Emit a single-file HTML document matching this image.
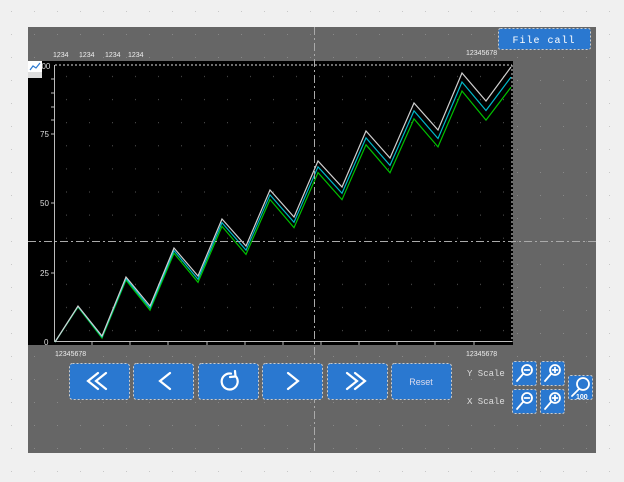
<!DOCTYPE html>
<html><head><meta charset="utf-8"><style>
html,body{margin:0;padding:0;background:#f0f0f0;width:624px;height:482px;overflow:hidden;font-family:"Liberation Mono",monospace}
</style></head><body>
<svg width="624" height="482" xmlns="http://www.w3.org/2000/svg" style="position:absolute;left:0;top:0">
<defs>
<pattern id="bgdots" width="23" height="23" patternUnits="userSpaceOnUse"><rect x="11" y="11" width="1" height="1" fill="#c8c8c8"/></pattern>
<pattern id="pdots" width="23" height="23" patternUnits="userSpaceOnUse"><rect x="11" y="11" width="1" height="1" fill="#888"/></pattern>
<pattern id="cdots" width="23" height="23.1" patternUnits="userSpaceOnUse" x="55" y="65"><rect x="11" y="11" width="1" height="1" fill="#555"/></pattern>
</defs>
<rect width="624" height="482" fill="url(#bgdots)"/>
<rect x="28" y="27" width="568" height="426" fill="#666"/>
<rect x="28" y="27" width="568" height="426" fill="url(#pdots)"/>
<rect x="28" y="61" width="485" height="284" fill="#000"/>
<rect x="55" y="65" width="457" height="277" fill="url(#cdots)"/>
<line x1="55" y1="65" x2="512" y2="65" stroke="#ddd" stroke-dasharray="2,2"/>
<line x1="512" y1="65" x2="512" y2="342" stroke="#ddd" stroke-dasharray="2,2"/>
<line x1="54.5" y1="65" x2="54.5" y2="342" stroke="#bbb"/>
<line x1="54" y1="341.5" x2="512" y2="341.5" stroke="#bbb"/>
<g stroke="#bbb">
<line x1="51" y1="134" x2="54" y2="134"/><line x1="51" y1="203" x2="54" y2="203"/><line x1="51" y1="273" x2="54" y2="273"/>
<line x1="51" y1="79" x2="54" y2="79"/><line x1="51" y1="93" x2="54" y2="93"/><line x1="51" y1="107" x2="54" y2="107"/><line x1="51" y1="120" x2="54" y2="120"/>
<line x1="92" y1="342" x2="92" y2="345"/><line x1="130" y1="342" x2="130" y2="345"/><line x1="168" y1="342" x2="168" y2="345"/><line x1="207" y1="342" x2="207" y2="345"/><line x1="245" y1="342" x2="245" y2="345"/><line x1="283" y1="342" x2="283" y2="345"/><line x1="321" y1="342" x2="321" y2="345"/><line x1="359" y1="342" x2="359" y2="345"/><line x1="397" y1="342" x2="397" y2="345"/><line x1="435" y1="342" x2="435" y2="345"/><line x1="474" y1="342" x2="474" y2="345"/>
</g>
<g fill="#ddd" font-size="8" font-family="Liberation Sans,sans-serif">
<text x="37" y="69">100</text><text x="40" y="137">75</text><text x="40" y="206">50</text><text x="40" y="276">25</text><text x="44" y="345">0</text>
</g>
<rect x="28" y="61" width="14" height="11" fill="#fff"/>
<path d="M30 70 L33 66 L36 68 L40 63" stroke="#2a78d0" fill="none" stroke-width="1.2"/>
<rect x="28" y="72" width="14" height="6" fill="#ddd"/>
<g id="lines" fill="none" stroke-width="1.2"></g>
<line x1="314.5" y1="27" x2="314.5" y2="453" stroke="#aaa" stroke-dasharray="8,3,2,3"/>
<line x1="28" y1="241.5" x2="596" y2="241.5" stroke="#aaa" stroke-dasharray="8,3,2,3"/>
<g fill="#eee" font-size="7" font-family="Liberation Sans,sans-serif">
<text x="53" y="57">1234</text><text x="79" y="57">1234</text><text x="105" y="57">1234</text><text x="128" y="57">1234</text>
<text x="466" y="55">12345678</text>
<text x="55" y="356">12345678</text><text x="466" y="356">12345678</text>
</g>
<rect x="498.5" y="28.5" width="92" height="21" rx="2" fill="#2a78d0" stroke="#ccc" stroke-dasharray="2,2"/>
<text x="544" y="43" fill="#fff" font-size="10" text-anchor="middle" letter-spacing="1">File call</text>
<g fill="#2a78d0" stroke="#ccc" stroke-dasharray="2,2">
<rect x="69.5" y="363.5" width="60" height="36" rx="3"/>
<rect x="133.5" y="363.5" width="60" height="36" rx="3"/>
<rect x="198.5" y="363.5" width="60" height="36" rx="3"/>
<rect x="262.5" y="363.5" width="60" height="36" rx="3"/>
<rect x="327.5" y="363.5" width="60" height="36" rx="3"/>
<rect x="391.5" y="363.5" width="60" height="36" rx="3"/>
</g>
<g stroke="#fff" stroke-width="2.2" fill="none" stroke-linecap="round">
<path d="M98 373 L88 381 L98 389 M106 373 L96 381 L106 389"/>
<path d="M170 373 L160 381 L170 389"/>
<path d="M235.5 376 A8 8 0 1 1 231 373.6"/><path d="M235 371 L235.5 376.5 L230 377"/>
<path d="M288 373 L298 381 L288 389"/>
<path d="M347 373 L357 381 L347 389 M355 373 L365 381 L355 389"/>
</g>
<text x="421" y="385" fill="#dde" font-size="9" text-anchor="middle" font-family="Liberation Sans,sans-serif">Reset</text>
<g fill="#ddd" font-size="9"><text x="467" y="376">Y Scale</text><text x="467" y="404">X Scale</text></g>
<g fill="#2a78d0" stroke="#ccc" stroke-dasharray="2,2">
<rect x="512.5" y="361.5" width="24" height="24" rx="2"/>
<rect x="540.5" y="361.5" width="24" height="24" rx="2"/>
<rect x="512.5" y="389.5" width="24" height="24" rx="2"/>
<rect x="540.5" y="389.5" width="24" height="24" rx="2"/>
<rect x="568.5" y="375.5" width="24" height="24" rx="2"/>
</g>
<g stroke="#fff" stroke-width="1.8" fill="none" stroke-linecap="round">
<circle cx="527" cy="370" r="5"/><path d="M523 374 L517 381 M524.5 370 L529.5 370"/>
<circle cx="555" cy="370" r="5"/><path d="M551 374 L545 381 M552.5 370 L557.5 370 M555 367.5 L555 372.5"/>
<circle cx="527" cy="398" r="5"/><path d="M523 402 L517 409 M524.5 398 L529.5 398"/>
<circle cx="555" cy="398" r="5"/><path d="M551 402 L545 409 M552.5 398 L557.5 398 M555 395.5 L555 400.5"/>
<circle cx="583" cy="384" r="6"/><path d="M579 389 L572 396"/>
</g>
<text x="576" y="399" fill="#fff" font-size="7" font-weight="bold" font-family="Liberation Sans,sans-serif">100</text>
</svg>
<script>
var g=document.getElementById('lines');
var px=[55],py=[342];
var peaks=[[78,306],[102,336],[126,277],[150,306],[174,248],[198,276],[222,219],[246,246],[270,190],[294,217],[318,161],[342,187],[366,131],[390,158],[414,103],[438,130],[462,73],[486,101],[511,67]];
peaks.forEach(function(p){px.push(p[0]);py.push(p[1]);});
[['#00c000',18],['#00b8c8',9],['#d0d0d0',0]].forEach(function(c){
 var s='';for(var i=0;i<px.length;i++){var y=py[i]+c[1]*(px[i]-55)/407;s+=px[i]+','+y.toFixed(1)+' ';}
 var pl=document.createElementNS('http://www.w3.org/2000/svg','polyline');
 pl.setAttribute('points',s);pl.setAttribute('stroke',c[0]);g.appendChild(pl);
});
</script>
</body></html>
